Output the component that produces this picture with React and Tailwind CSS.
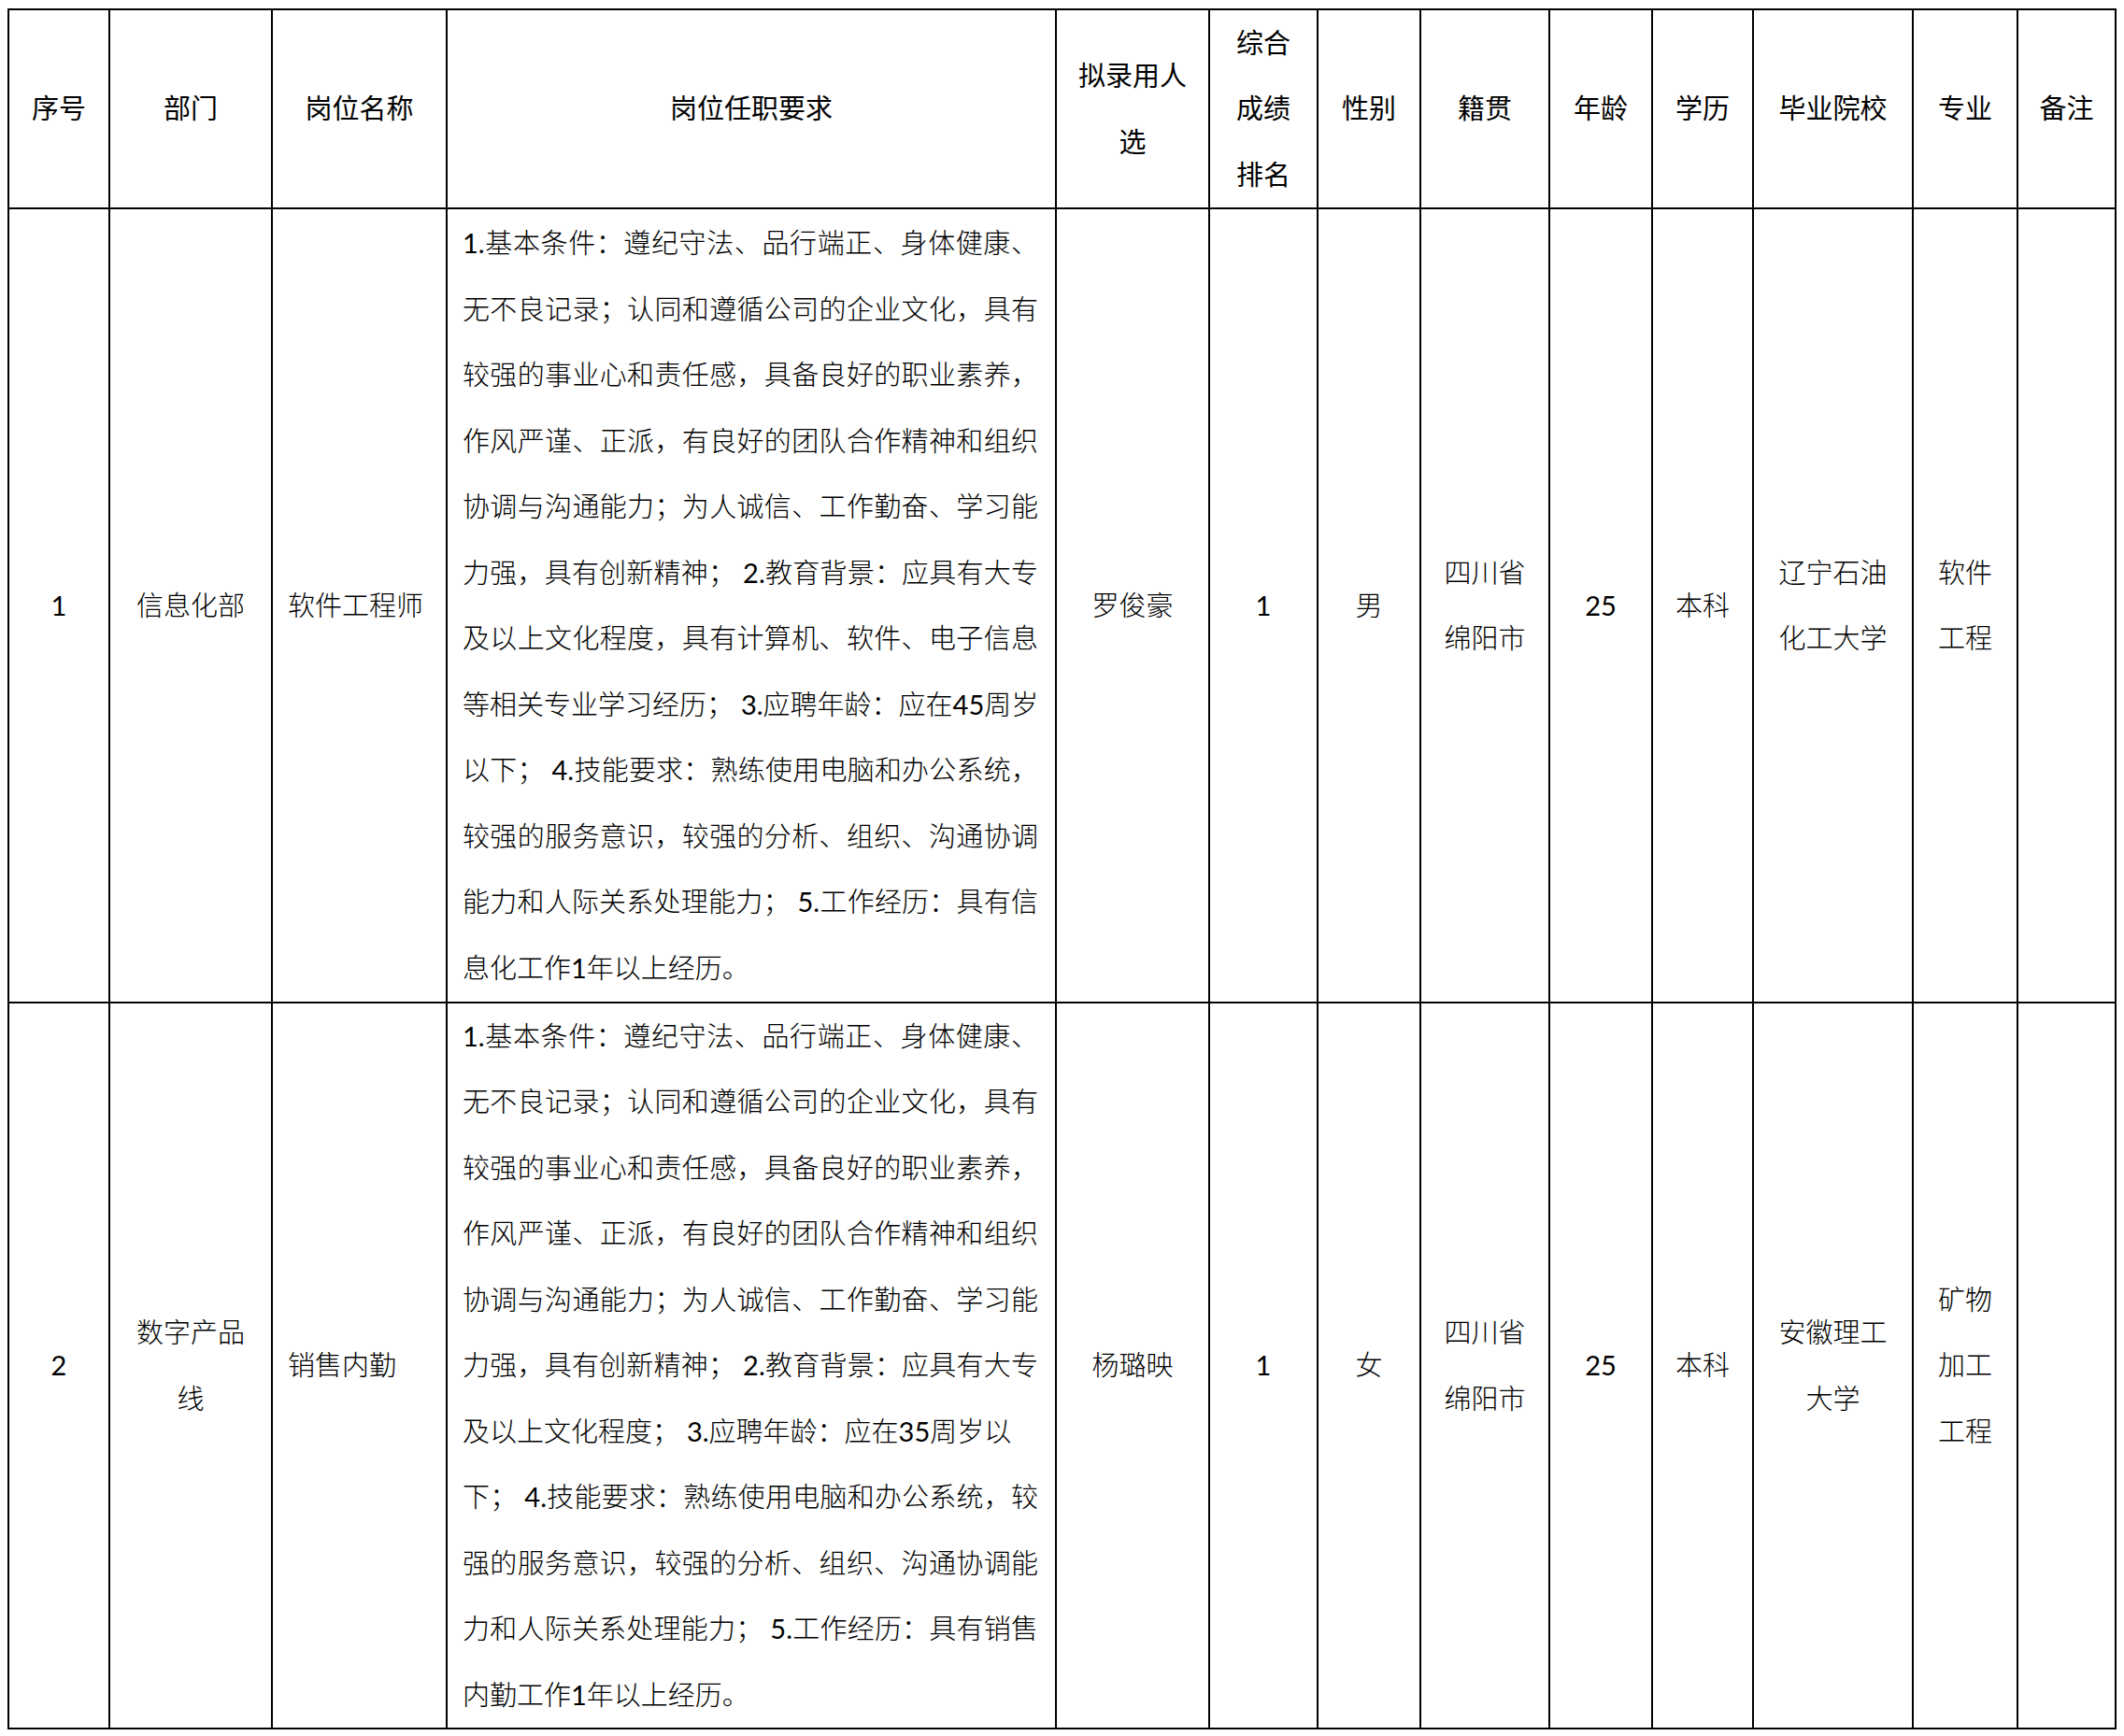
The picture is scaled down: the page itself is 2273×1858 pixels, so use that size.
import React from "react";

const headers = [
  { lines: ["序号"] },
  { lines: ["部门"] },
  { lines: ["岗位名称"] },
  { lines: ["岗位任职要求"] },
  { lines: ["拟录用人", "选"] },
  { lines: ["综合", "成绩", "排名"] },
  { lines: ["性别"] },
  { lines: ["籍贯"] },
  { lines: ["年龄"] },
  { lines: ["学历"] },
  { lines: ["毕业院校"] },
  { lines: ["专业"] },
  { lines: ["备注"] },
];

const desc1 = [
  ["1.基本条件：遵纪守法、品行端正、身体健康、", true],
  ["无不良记录；认同和遵循公司的企业文化，具有", true],
  ["较强的事业心和责任感，具备良好的职业素养，", true],
  ["作风严谨、正派，有良好的团队合作精神和组织", true],
  ["协调与沟通能力；为人诚信、工作勤奋、学习能", true],
  ["力强，具有创新精神； 2.教育背景：应具有大专", true],
  ["及以上文化程度，具有计算机、软件、电子信息", true],
  ["等相关专业学习经历； 3.应聘年龄：应在45周岁", true],
  ["以下； 4.技能要求：熟练使用电脑和办公系统，", true],
  ["较强的服务意识，较强的分析、组织、沟通协调", true],
  ["能力和人际关系处理能力； 5.工作经历：具有信", true],
  ["息化工作1年以上经历。", false],
];

const desc2 = [
  ["1.基本条件：遵纪守法、品行端正、身体健康、", true],
  ["无不良记录；认同和遵循公司的企业文化，具有", true],
  ["较强的事业心和责任感，具备良好的职业素养，", true],
  ["作风严谨、正派，有良好的团队合作精神和组织", true],
  ["协调与沟通能力；为人诚信、工作勤奋、学习能", true],
  ["力强，具有创新精神； 2.教育背景：应具有大专", true],
  ["及以上文化程度； 3.应聘年龄：应在35周岁以", false],
  ["下； 4.技能要求：熟练使用电脑和办公系统，较", true],
  ["强的服务意识，较强的分析、组织、沟通协调能", true],
  ["力和人际关系处理能力； 5.工作经历：具有销售", true],
  ["内勤工作1年以上经历。", false],
];

const rows = [
  [
    { lines: ["1"] },
    { lines: ["信息化部"] },
    { lines: ["软件工程师"], left: true },
    { desc: desc1 },
    { lines: ["罗俊豪"] },
    { lines: ["1"] },
    { lines: ["男"] },
    { lines: ["四川省", "绵阳市"] },
    { lines: ["25"] },
    { lines: ["本科"] },
    { lines: ["辽宁石油", "化工大学"] },
    { lines: ["软件", "工程"] },
    { lines: [] },
  ],
  [
    { lines: ["2"] },
    { lines: ["数字产品", "线"] },
    { lines: ["销售内勤"], left: true },
    { desc: desc2 },
    { lines: ["杨璐映"] },
    { lines: ["1"] },
    { lines: ["女"] },
    { lines: ["四川省", "绵阳市"] },
    { lines: ["25"] },
    { lines: ["本科"] },
    { lines: ["安徽理工", "大学"] },
    { lines: ["矿物", "加工", "工程"] },
    { lines: [] },
  ],
];

function Rich({ text }) {
  const parts = text.split(/([0-9.]+)/);
  return parts.map((p, i) =>
    /^[0-9.]+$/.test(p) ? (
      <span key={i} className="font-normal">
        {p}
      </span>
    ) : (
      <React.Fragment key={i}>{p}</React.Fragment>
    )
  );
}

function HeaderCell({ lines }) {
  return (
    <div className="bg-white flex flex-col justify-center items-center text-center px-[16px] font-normal">
      {lines.map((l, i) => (
        <div key={i} className="leading-[70.5px] whitespace-nowrap">
          {l}
        </div>
      ))}
    </div>
  );
}

function BodyCell({ cell }) {
  if (cell.desc) {
    return (
      <div className="bg-white flex flex-col justify-center pl-[16px] pr-[18px] font-light">
        {cell.desc.map(([t, j], i) => (
          <div
            key={i}
            className={
              "leading-[70.5px] whitespace-nowrap " +
              (j ? "text-justify [text-align-last:justify]" : "text-left")
            }
          >
            <Rich text={t} />
          </div>
        ))}
      </div>
    );
  }
  return (
    <div
      className={
        "bg-white flex flex-col justify-center px-[16px] font-light " +
        (cell.left ? "items-start text-left" : "items-center text-center")
      }
    >
      {cell.lines.map((l, i) => (
        <div key={i} className="leading-[70.5px] whitespace-nowrap">
          <Rich text={l} />
        </div>
      ))}
    </div>
  );
}

export default function App() {
  return (
    <div className="min-h-[1858px] bg-white pl-[8px] pt-[9px] text-black text-[29px] font-['Lato','Noto_Sans_CJK_SC',sans-serif]">
      <div className="grid w-max grid-cols-[106px_172px_185px_650px_162px_114px_108px_136px_108px_106px_169px_110px_103px] grid-rows-[211px_848px_775px] gap-[2px] bg-black p-[2px]">
        {headers.map((h, i) => (
          <HeaderCell key={"h" + i} lines={h.lines} />
        ))}
        {rows.map((r, ri) =>
          r.map((c, ci) => <BodyCell key={ri + "-" + ci} cell={c} />)
        )}
      </div>
    </div>
  );
}
